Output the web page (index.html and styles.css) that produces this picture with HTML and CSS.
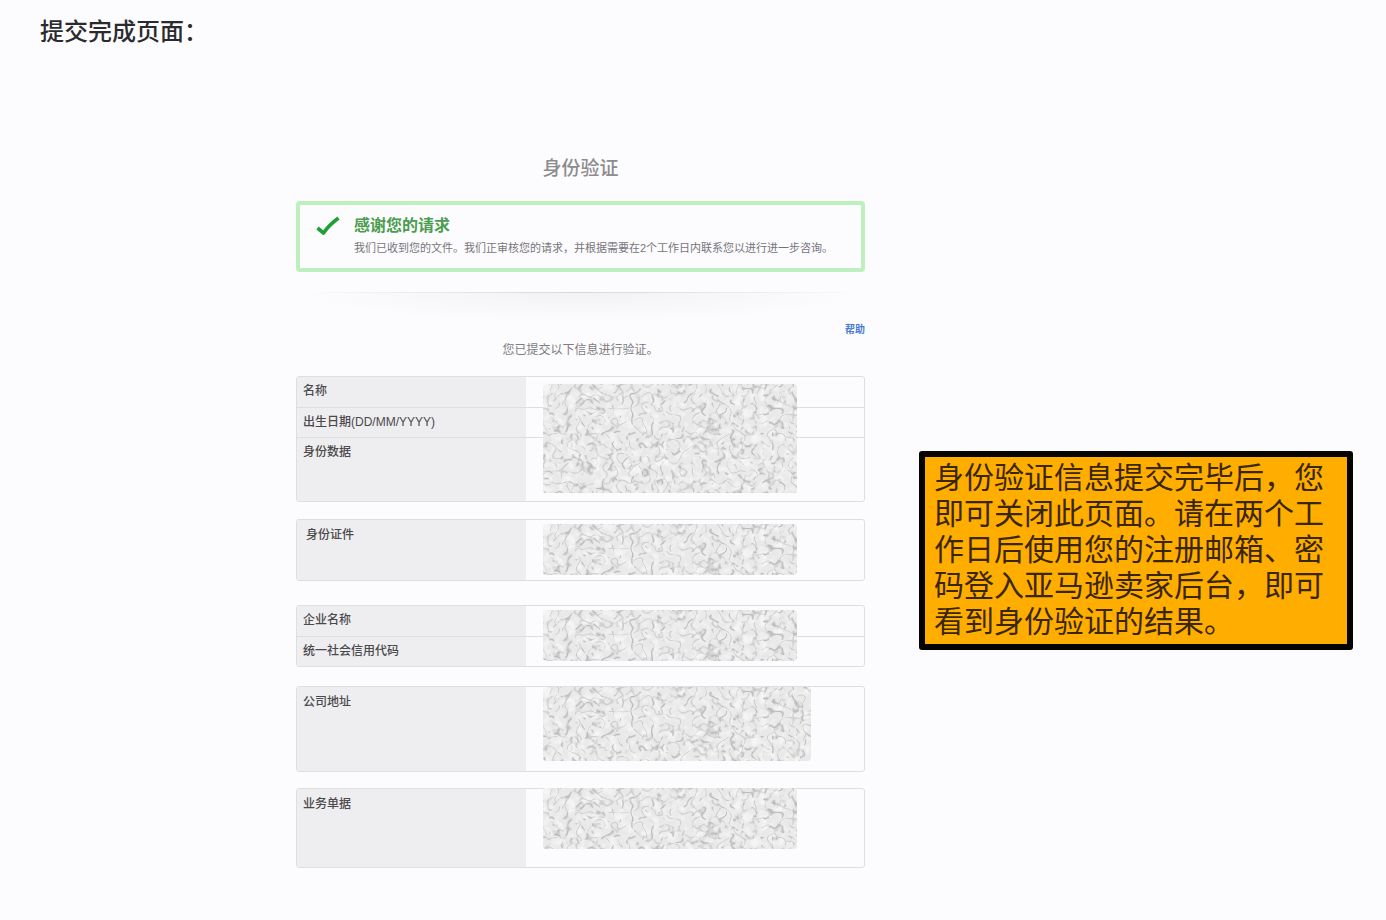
FILE: index.html
```html
<!DOCTYPE html>
<html lang="zh-CN">
<head>
<meta charset="utf-8">
<meta name="viewport" content="width=device-width, initial-scale=1">
<title>身份验证</title>
<link rel="stylesheet" href="styles.css">
</head>
<body>
<svg class="defs" width="0" height="0" aria-hidden="true">
  <filter id="grain" x="0" y="0" width="100%" height="100%" color-interpolation-filters="sRGB">
    <feTurbulence type="turbulence" baseFrequency="0.1" numOctaves="1" seed="4" result="veins"/>
    <feColorMatrix in="veins" type="matrix" values="0 0 0 0 0.68  0 0 0 0 0.68  0 0 0 0 0.68  0 0 0 -6 0.8" result="lines"/>
    <feTurbulence type="fractalNoise" baseFrequency="0.14" numOctaves="2" seed="9" result="spots"/>
    <feColorMatrix in="spots" type="matrix" values="0 0 0 0 0  0 0 0 0 0  0 0 0 0 0  0 0 0 8 -3.8" result="mask"/>
    <feComposite in="lines" in2="mask" operator="in" result="strokes"/>
    <feTurbulence type="fractalNoise" baseFrequency="0.12" numOctaves="2" seed="31" result="flecks"/>
    <feColorMatrix in="flecks" type="matrix" values="0 0 0 0 0.96  0 0 0 0 0.96  0 0 0 0 0.96  0 0 0 3 -1.3" result="light"/>
    <feTurbulence type="turbulence" baseFrequency="0.08" numOctaves="1" seed="21" result="veins2"/>
    <feColorMatrix in="veins2" type="matrix" values="0 0 0 0 0.7  0 0 0 0 0.7  0 0 0 0 0.69  0 0 0 -8 0.55" result="lines2"/>
    <feComposite in="lines2" in2="mask" operator="out" result="strokes2"/>
    <feMerge result="all">
      <feMergeNode in="SourceGraphic"/>
      <feMergeNode in="light"/>
      <feMergeNode in="strokes"/>
      <feMergeNode in="strokes2"/>
    </feMerge>
    <feComposite in="all" in2="SourceGraphic" operator="in"/>
  </filter>
</svg>

<header class="page-header"><h1>提交完成页面：</h1></header>

<main class="layout">
  <section class="form">
    <h2 class="form-title">身份验证</h2>

    <div class="alert" role="status">
      <svg class="check" viewBox="0 0 24 20" aria-hidden="true"><path d="M1.5 12 L7.5 17 Q13 9 22.5 2" fill="none" stroke="#1fa036" stroke-width="3.6" stroke-linejoin="round"/></svg>
      <div class="alert-body">
        <h3>感谢您的请求</h3>
        <p>我们已收到您的文件。我们正审核您的请求，并根据需要在2个工作日内联系您以进行进一步咨询。</p>
      </div>
    </div>

    <div class="divider"></div>
    <a class="help" href="#help">帮助</a>
    <p class="intro">您已提交以下信息进行验证。</p>

    <div class="card card-identity">
      <table>
        <tr><th scope="row">名称</th><td></td></tr>
        <tr><th scope="row">出生日期(DD/MM/YYYY)</th><td></td></tr>
        <tr class="row-medium"><th scope="row">身份数据</th><td></td></tr>
      </table>
      <div class="mask"></div>
    </div>

    <div class="card card-document">
      <table>
        <tr class="row-double"><th scope="row">身份证件</th><td></td></tr>
      </table>
      <div class="mask"></div>
    </div>

    <div class="card card-company">
      <table>
        <tr><th scope="row">企业名称</th><td></td></tr>
        <tr><th scope="row">统一社会信用代码</th><td></td></tr>
      </table>
      <div class="mask"></div>
    </div>

    <div class="card card-address">
      <table>
        <tr class="row-tall"><th scope="row">公司地址</th><td></td></tr>
      </table>
      <div class="mask"></div>
    </div>

    <div class="card card-bill">
      <table>
        <tr class="row-large"><th scope="row">业务单据</th><td></td></tr>
      </table>
      <div class="mask"></div>
    </div>
  </section>

  <aside class="callout">身份验证信息提交完毕后，您即可关闭此页面。请在两个工作日后使用您的注册邮箱、密码登入亚马逊卖家后台，即可看到身份验证的结果。</aside>
</main>
</body>
</html>
```

FILE: styles.css
```css
* {
  box-sizing: border-box;
}

body {
  margin: 0;
  background: #fcfbfe;
  color: #333;
  font-family: "Liberation Sans", "Noto Sans CJK SC", sans-serif;
  font-size: 12px;
  line-height: 16px;
}

h1,
h2,
h3,
p {
  margin: 0;
}

.defs {
  position: absolute;
}

.page-header {
  padding: 14px 40px 0;
}

.page-header h1 {
  font-family: "Noto Sans CJK SC", sans-serif;
  font-size: 24px;
  font-weight: 500;
  line-height: 32px;
  color: #2b2b2d;
}

.layout {
  display: grid;
  grid-template-columns: minmax(0, 569fr) minmax(0, 434fr);
  column-gap: 54px;
  align-items: start;
  padding: 110px 33px 48px 296px;
}

.form {
  display: flex;
  flex-direction: column;
}

.form-title {
  padding-top: 1px;
  font-size: 19px;
  font-weight: 500;
  line-height: 24px;
  text-align: center;
  color: #8d8b8f;
}

.alert {
  display: flex;
  gap: 14px;
  margin-top: 20px;
  padding: 10px 16px 12px;
  border: 4px solid #bdefbf;
  border-radius: 4px;
}

.check {
  flex: none;
  width: 24px;
  height: 20px;
  margin-top: 1px;
}

.alert-body h3 {
  font-size: 16px;
  font-weight: 700;
  line-height: 22px;
  color: #4a9c4e;
}

.alert-body p {
  margin-top: 3px;
  font-size: 11px;
  color: #77757a;
}

.divider {
  height: 30px;
  margin-top: 20px;
  background:
    linear-gradient(90deg, transparent, #d9d8dc 50%, transparent) top / 100% 1px no-repeat,
    radial-gradient(ellipse 50% 100% at 50% 0, #f2f1f4, transparent);
}

.help {
  align-self: flex-end;
  font-size: 10px;
  line-height: 16px;
  font-weight: 700;
  color: #4a7bd4;
  text-decoration: none;
}

.intro {
  margin-top: 4px;
  text-align: center;
  color: #7e7c80;
}

.card {
  position: relative;
  margin-top: 18px;
  border: 1px solid #dedde0;
  border-radius: 3px;
}

.card-document {
  margin-top: 17px;
}

.card-company {
  margin-top: 24px;
}

.card-address {
  margin-top: 19px;
}

.card-bill {
  margin-top: 16px;
}

.card table {
  width: 100%;
  border-collapse: collapse;
  table-layout: fixed;
}

.card tr {
  height: 30px;
}

.card .row-double {
  height: 60px;
}

.card .row-medium {
  height: 64px;
}

.card .row-large {
  height: 78px;
}

.card .row-tall {
  height: 84px;
}

.card tr + tr {
  border-top: 1px solid #dedde0;
}

.card th {
  width: 229px;
  padding: 6px;
  background: #eeedef;
  font-weight: 500;
  text-align: left;
  vertical-align: top;
  color: #4a494c;
}

.card-document th,
.card-address th,
.card-bill th {
  padding-top: 7px;
}

.card-document th {
  padding-left: 9px;
}

.card td {
  padding: 0;
}

/* Redacted values lie across the rows of a card. */
.mask {
  position: absolute;
  top: 4px;
  left: 246px;
  width: 254px;
  height: 51px;
  max-width: calc(100% - 246px);
  border-radius: 3px;
  background: #e9e9e9;
  filter: url(#grain);
}

.card-identity .mask {
  top: 7px;
  height: 109px;
}

.card-address .mask {
  top: 0;
  width: 268px;
  height: 74px;
}

.card-bill .mask {
  top: -1px;
  height: 61px;
}

.callout {
  margin-top: 295px;
  padding: 0 9px 7px;
  border: 6px solid #050400;
  border-radius: 3px;
  background: #ffae00;
  color: #3a2600;
  font-family: "Noto Sans CJK SC", sans-serif;
  font-size: 30px;
  font-weight: 400;
  line-height: 36px;
}
```
